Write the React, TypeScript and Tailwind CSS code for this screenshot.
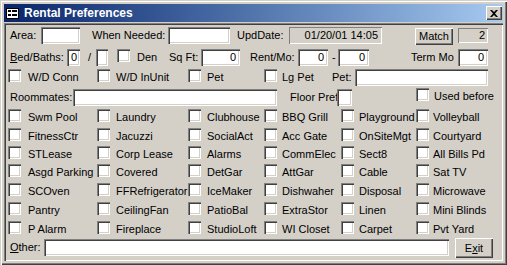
import React from "react";

// classic win2000 bevels
const sunken =
  "bg-white shadow-[inset_1px_1px_0_#808080,inset_2px_2px_0_#404040,inset_-1px_-1px_0_#ffffff,inset_-2px_-2px_0_#d4d0c8]";
const flat = "bg-[#d4d0c8] shadow-[inset_1px_1px_0_#808080,inset_-1px_-1px_0_#ffffff]";
const raised =
  "bg-[#d4d0c8] shadow-[inset_1px_1px_0_#ffffff,inset_-1px_-1px_0_#404040,inset_-2px_-2px_0_#808080]";

const grid: string[][] = [
  ["Swm Pool", "Laundry", "Clubhouse", "BBQ Grill", "Playground", "Volleyball"],
  ["FitnessCtr", "Jacuzzi", "SocialAct", "Acc Gate", "OnSiteMgt", "Courtyard"],
  ["STLease", "Corp Lease", "Alarms", "CommElec", "Sect8", "All Bills Pd"],
  ["Asgd Parking", "Covered", "DetGar", "AttGar", "Cable", "Sat TV"],
  ["SCOven", "FFRefrigerator", "IceMaker", "Dishwaher", "Disposal", "Microwave"],
  ["Pantry", "CeilingFan", "PatioBal", "ExtraStor", "Linen", "Mini Blinds"],
  ["P Alarm", "Fireplace", "StudioLoft", "WI Closet", "Carpet", "Pvt Yard"],
];

const labelGap = ["ml-[7px]", "ml-[6px]", "ml-[6px]", "ml-[5px]", "ml-[5px]", "ml-[4px]"];

function Box({ className = "" }: { className?: string }) {
  return <div className={`w-[13px] h-[13px] shrink-0 ${sunken} ${className}`} />;
}

function Check({ label, gap = "ml-[6px]" }: { label: string; gap?: string }) {
  return (
    <div className="flex items-start whitespace-nowrap">
      <Box />
      <span className={`${gap} leading-[16px]`}>{label}</span>
    </div>
  );
}

function Label({ children, className = "" }: { children: React.ReactNode; className?: string }) {
  return <span className={`h-[17px] leading-[17px] whitespace-nowrap shrink-0 ${className}`}>{children}</span>;
}

function Field({ className = "", value, left }: { className?: string; value?: string; left?: boolean }) {
  return (
    <div
      className={`h-[17px] leading-[17px] shrink-0 ${sunken} ${left ? "pl-[4px]" : "text-right pr-[4px]"} ${className}`}
    >
      {value}
    </div>
  );
}

function TitleIcon() {
  return (
    <svg width="13" height="11" viewBox="0 0 13 11" className="shrink-0">
      <rect x="0.5" y="0.5" width="12" height="10" fill="#fff" stroke="#000" />
      <rect x="2" y="2" width="3" height="2" fill="#000" />
      <rect x="6" y="2" width="5" height="2" fill="#000" />
      <rect x="2" y="6" width="3" height="2" fill="#000" />
      <rect x="6" y="6" width="5" height="2" fill="#000" />
    </svg>
  );
}

export default function App() {
  return (
    <div className="w-[507px] h-[265px] bg-[#d4d0c8] p-[4px] flex flex-col font-['Liberation_Sans',Arial,sans-serif] text-[11px] text-black shadow-[inset_1px_1px_0_#d4d0c8,inset_2px_2px_0_#ffffff,inset_-1px_-1px_0_#404040,inset_-2px_-2px_0_#808080]">
      {/* Caption */}
      <div className="h-[18px] shrink-0 flex items-center bg-linear-to-r from-[#0a246a] to-[#a6caf0]">
        <div className="ml-[2px]">
          <TitleIcon />
        </div>
        <span className="ml-[5px] text-white font-bold text-[12px] leading-[18px]">Rental Preferences</span>
        <div className={`ml-auto mr-[1px] w-[16px] h-[14px] flex items-center justify-center ${raised}`}>
          <svg width="8" height="7" viewBox="0 0 8 7">
            <path d="M0 0h2l2 2 2-2h2L5 3.5 8 7H6L4 5 2 7H0l3-3.5z" fill="#000" />
          </svg>
        </div>
      </div>

      {/* Form client */}
      <div className="mt-[1px] flex-1 flex flex-col shadow-[inset_1px_1px_0_#808080,inset_2px_2px_0_#404040,inset_-1px_-1px_0_#ffffff,inset_-2px_-2px_0_#d4d0c8]">
        {/* row 1 */}
        <div className="mt-[4px] flex items-start">
          <Label className="ml-[6px] w-[31px]">Area:</Label>
          <Field className="w-[39px]" />
          <Label className="ml-[12px] w-[76px]">When Needed:</Label>
          <Field className="w-[62px]" />
          <Label className="ml-[7px] w-[52px]">UpdDate:</Label>
          <div className={`w-[93px] h-[17px] leading-[17px] text-right pr-[4px] ${flat}`}>01/20/01 14:05</div>
          <div className={`ml-[33px] mt-[1px] w-[38px] h-[17px] leading-[17px] text-center ${raised}`}>Match</div>
          <div className={`ml-[5px] mt-[1px] w-[30px] h-[15px] leading-[15px] text-right pr-[3px] ${flat}`}>2</div>
        </div>

        {/* row 2 */}
        <div className="mt-[4px] flex items-start">
          <Label className="ml-[6px] w-[57px]">
            <span className="underline">B</span>ed/Baths:
          </Label>
          <Field className="w-[13px]" value="0" left />
          <Label className="w-[16px] pl-[8px]">/</Label>
          <Field className="w-[12px]" />
          <Box className="ml-[9px]" />
          <span className="ml-[7px] w-[32px] leading-[16px]">Den</span>
          <Label className="w-[32px]">Sq Ft:</Label>
          <Field className="w-[39px]" value="0" />
          <Label className="ml-[10px] w-[48px]">Rent/Mo:</Label>
          <Field className="w-[30px]" value="0" />
          <Label className="w-[10px] pl-[4px]">-</Label>
          <Field className="w-[31px]" value="0" />
          <Label className="ml-[42px] w-[47px]">Term Mo</Label>
          <Field className="w-[30px]" value="0" />
        </div>

        {/* row 3 */}
        <div className="mt-[3px] flex items-start h-[17px]">
          <Box className="ml-[4px]" />
          <span className="ml-[7px] w-[69px] leading-[16px]">W/D Conn</span>
          <Box />
          <span className="ml-[6px] w-[72px] leading-[16px]">W/D InUnit</span>
          <Box />
          <span className="ml-[6px] w-[57px] leading-[16px]">Pet</span>
          <Box />
          <span className="ml-[5px] w-[50px] leading-[16px]">Lg Pet</span>
          <Label className="w-[23px]">Pet:</Label>
          <Field className="w-[133px]" />
        </div>

        {/* row 4 */}
        <div className="mt-[3px] flex items-start h-[17px]">
          <Label className="ml-[6px] w-[63px]">Roommates:</Label>
          <Field className="w-[204px]" />
          <Label className="ml-[13px] w-[47px]">Floor Pref</Label>
          <Field className="w-[15px]" />
          <div className="ml-[64px] -mt-px">
            <Check label="Used before" gap="ml-[5px]" />
          </div>
        </div>

        {/* amenities */}
        <div className="mt-[3px] ml-[4px] grid grid-cols-[89px_91px_76px_77px_75px_1fr] grid-rows-[19px_18px_18px_19px_19px_19px_13px]">
          {grid.map((row, r) =>
            row.map((item, c) => <Check key={`${r}-${c}`} label={item} gap={labelGap[c]} />)
          )}
        </div>

        {/* other */}
        <div className="mt-[4px] flex items-start">
          <Label className="ml-[6px] mt-[1px] w-[34px]">
            <span className="underline">O</span>ther:
          </Label>
          <Field className="mt-[1px] w-[405px]" />
          <div className={`ml-[6px] w-[38px] h-[20px] leading-[20px] text-center ${raised}`}>
            E<span className="underline">x</span>it
          </div>
        </div>
      </div>
    </div>
  );
}
